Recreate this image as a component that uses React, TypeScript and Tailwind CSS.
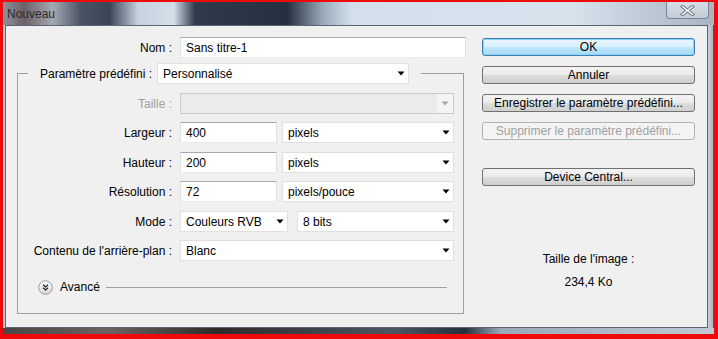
const font = "font-['Liberation_Sans',Arial,sans-serif] text-[12px] leading-none";

function TextField({ value, w }: { value: string; w: string }) {
  return (
    <div
      className={`${w} h-[21px] bg-white border border-[#dcdfe4] border-t-[#a6a9ad] border-b-[#e8ebee] flex items-center pl-[5px] text-black`}
    >
      {value}
    </div>
  );
}

function Caret({ color = "#000" }: { color?: string }) {
  return (
    <svg width="8" height="5" viewBox="0 0 8 5">
      <path d="M0.5 0.5 H7.5 L4 4.5 Z" fill={color} />
    </svg>
  );
}

function Select({ value, w, disabled = false }: { value: string; w: string; disabled?: boolean }) {
  if (disabled) {
    return (
      <div className={`${w} h-[21px] bg-[#ebebeb] border border-[#c9c9c9] flex items-center justify-end`}>
        <div className="w-[16px] h-full bg-[#f5f5f5] flex items-center justify-center">
          <Caret color="#a8a8a8" />
        </div>
      </div>
    );
  }
  return (
    <div className={`${w} h-[21px] bg-white border border-[#e0e0e0] flex items-center justify-between pl-[5px] pr-[3px] text-black`}>
      <span>{value}</span>
      <Caret />
    </div>
  );
}

function Button({ label, variant = "normal" }: { label: string; variant?: "normal" | "default" | "disabled" }) {
  const styles = {
    normal:
      "border-[#707070] text-black bg-[linear-gradient(180deg,#f3f3f3_0%,#ebebeb_49%,#dddddd_51%,#cfcfcf_100%)]",
    default:
      "border-[#3c7fb1] text-black bg-[linear-gradient(180deg,#eaf6fd_0%,#d9f0fc_49%,#bee6fd_51%,#a7d9f5_100%)] shadow-[inset_0_0_0_1px_#8ad3f7]",
    disabled: "border-[#adb2b5] text-[#a0a0a0] bg-[#f4f4f4]",
  }[variant];
  return (
    <div className={`w-[213px] h-[18px] rounded-[3px] border flex items-center justify-center ${styles}`}>
      {label}
    </div>
  );
}

function Row({ label, mt, children, muted = false }: { label: string; mt: string; children: React.ReactNode; muted?: boolean }) {
  return (
    <div className={`flex items-center h-[21px] ${mt}`}>
      <div className={`w-[154px] text-right ${muted ? "text-[#a0a0a0]" : "text-black"}`}>{label}</div>
      <div className="ml-[8px] flex items-center">{children}</div>
    </div>
  );
}

function AdvancedIcon() {
  return (
    <svg width="15" height="15" viewBox="0 0 15 15">
      <defs>
        <linearGradient id="adv" x1="0" y1="0" x2="0" y2="1">
          <stop offset="0" stopColor="#ffffff" />
          <stop offset="1" stopColor="#d8d8d8" />
        </linearGradient>
      </defs>
      <circle cx="7.5" cy="7.5" r="6.8" fill="url(#adv)" stroke="#9a9a9a" strokeWidth="1" />
      <path d="M5 4.8 L7.5 7 L10 4.8 M5 7.8 L7.5 10 L10 7.8" fill="none" stroke="#222" strokeWidth="1.3" />
    </svg>
  );
}

export default function App() {
  return (
    <div className={`w-[718px] h-[339px] bg-[#ee0a0a] pl-[3px] pt-[2px] ${font}`}>
      <div className="w-[711px] h-[332px] flex flex-col bg-[#c3ccd6]">
        {/* Title bar */}
        <div className="relative h-[23px] flex items-center pl-[4px] bg-[linear-gradient(90deg,#8d929b_0%,#6f5f66_3%,#a3a9b3_7%,#4a5364_11%,#3b4556_15%,#c6d2de_19%,#d4dfea_24%,#2f3a4b_27%,#25303f_40%,#9aa9bb_45%,#d3dfeb_49%,#d7e2ed_80%,#bfcbd7_90%,#a9b5c1_100%)]">
          <span className="text-[#2a2a2a]">Nouveau</span>
          <div className="absolute right-[5px] top-0 w-[43px] h-[17px] rounded-b-[4px] border border-t-0 border-[#7b8591] bg-[linear-gradient(180deg,#d6dde6_0%,#c3ccd7_100%)] flex items-center justify-center">
            <svg width="15" height="11" viewBox="0 0 15 11">
              <path d="M2.5 1.5 L12.5 9.5 M12.5 1.5 L2.5 9.5" stroke="#6a737d" strokeWidth="3.4" strokeLinecap="square" />
              <path d="M2.5 1.5 L12.5 9.5 M12.5 1.5 L2.5 9.5" stroke="#ffffff" strokeWidth="1.6" strokeLinecap="square" />
            </svg>
          </div>
        </div>

        <div className="flex flex-1 pl-[2px]">
          {/* Client area */}
          <div className="w-[703px] h-[303px] border border-[#5b6573] bg-[#f0f0f0] flex">
            {/* Left column */}
            <div className="w-[470px] flex flex-col">
              <div className="flex items-center h-[21px] mt-[11px]">
                <div className="w-[166px] text-right text-black">Nom :</div>
                <div className="ml-[8px]">
                  <TextField value="Sans titre-1" w="w-[286px]" />
                </div>
              </div>

              <fieldset className="ml-[11px] mt-[5px] w-[447px] h-[251px] border border-[#a0a0a0]">
                <legend className="ml-[10px] px-[12px]">
                  <div className="flex items-center h-[21px]">
                    <span className="text-black">Paramètre prédéfini :</span>
                    <div className="ml-[5px]">
                      <Select value="Personnalisé" w="w-[252px]" />
                    </div>
                  </div>
                </legend>

                <Row label="Taille :" mt="mt-[9px]" muted>
                  <Select value="" w="w-[274px]" disabled />
                </Row>
                <Row label="Largeur :" mt="mt-[8px]">
                  <TextField value="400" w="w-[97px]" />
                  <div className="ml-[5px]">
                    <Select value="pixels" w="w-[172px]" />
                  </div>
                </Row>
                <Row label="Hauteur :" mt="mt-[9px]">
                  <TextField value="200" w="w-[97px]" />
                  <div className="ml-[5px]">
                    <Select value="pixels" w="w-[172px]" />
                  </div>
                </Row>
                <Row label="Résolution :" mt="mt-[8px]">
                  <TextField value="72" w="w-[97px]" />
                  <div className="ml-[5px]">
                    <Select value="pixels/pouce" w="w-[172px]" />
                  </div>
                </Row>
                <Row label="Mode :" mt="mt-[9px]">
                  <Select value="Couleurs RVB" w="w-[108px]" />
                  <div className="ml-[9px]">
                    <Select value="8 bits" w="w-[157px]" />
                  </div>
                </Row>
                <Row label="Contenu de l'arrière-plan :" mt="mt-[8px]">
                  <Select value="Blanc" w="w-[274px]" />
                </Row>

                <div className="flex items-center h-[16px] mt-[18px] pl-[20px]">
                  <AdvancedIcon />
                  <span className="ml-[7px] text-black">Avancé</span>
                  <div className="ml-[6px] w-[341px] h-px bg-[#a0a0a0]" />
                </div>
              </fieldset>
            </div>

            {/* Right column */}
            <div className="ml-[6px] flex flex-col pt-[12px]">
              <Button label="OK" variant="default" />
              <div className="mt-[10px]">
                <Button label="Annuler" />
              </div>
              <div className="mt-[10px]">
                <Button label="Enregistrer le paramètre prédéfini..." />
              </div>
              <div className="mt-[10px]">
                <Button label="Supprimer le paramètre prédéfini..." variant="disabled" />
              </div>
              <div className="mt-[28px]">
                <Button label="Device Central..." />
              </div>
              <div className="mt-[67px] w-[213px] flex flex-col items-center text-black">
                <span>Taille de l'image :</span>
                <span className="mt-[11px]">234,4 Ko</span>
              </div>
            </div>
          </div>
          {/* right frame */}
          <div className="w-[6px] bg-[linear-gradient(90deg,#c6d0da,#aab6c2)] border-r border-[#4b5560]" />
        </div>

        {/* bottom frame */}
        <div className="h-[6px] bg-[linear-gradient(90deg,#4a4546_0%,#6b6264_15%,#2e2b2c_30%,#4c5663_55%,#25303c_65%,#9aa8b6_70%,#c0cad5_100%)]" />
      </div>
    </div>
  );
}
